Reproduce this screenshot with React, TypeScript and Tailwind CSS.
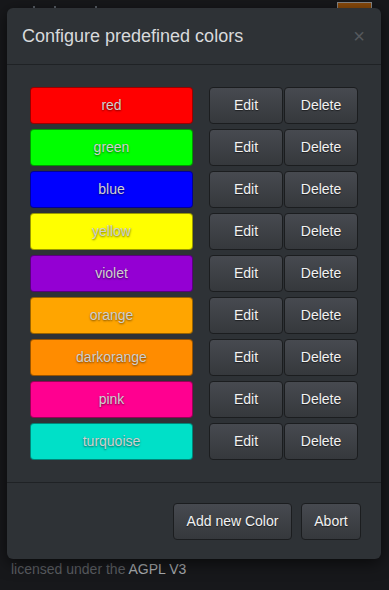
const colors = [
  { name: "red", bg: "bg-[#ff0000]" },
  { name: "green", bg: "bg-[#00ff00]" },
  { name: "blue", bg: "bg-[#0000ff]" },
  { name: "yellow", bg: "bg-[#ffff00]" },
  { name: "violet", bg: "bg-[#9400d3]" },
  { name: "orange", bg: "bg-[#ffa500]" },
  { name: "darkorange", bg: "bg-[#ff8c00]" },
  { name: "pink", bg: "bg-[#ff0090]" },
  { name: "turquoise", bg: "bg-[#00e0c8]" },
]

const btn =
  "h-[37px] rounded-[4px] border border-[#1b1d1f] bg-gradient-to-b from-[#474a50] to-[#35383c] text-[14px] text-[#f2f2f2] [text-shadow:0_1px_1px_rgba(0,0,0,0.5)]"

export default function App() {
  return (
    <div
      className="relative h-[590px] w-[389px] overflow-hidden bg-[#17181b]"
      style={{ fontFamily: '"Liberation Sans", Arial, sans-serif' }}
    >
      {/* page behind the dialog: only tips of the heading and the avatar peek out */}
      <span className="absolute left-[33px] top-[6px] h-[3px] w-[2px] bg-[#5a6068]" />
      <span className="absolute left-[54px] top-[6px] h-[3px] w-[2px] bg-[#5a6068]" />
      <span className="absolute left-[95px] top-[6px] h-[3px] w-[2px] bg-[#5a6068]" />
      <div className="absolute left-[337px] top-[2px] h-[30px] w-[35px] border border-[#888] bg-[#8a4a0a]" />
      <p className="absolute left-[11px] top-[559px] text-[14px] text-[#5c5f63]">
        licensed under the <span className="text-[#a9acaf]">AGPL V3</span>
      </p>

      {/* dialog */}
      <div className="absolute left-[7px] top-[8px] flex w-[374px] flex-col rounded-[6px] bg-[#2e3236] shadow-[0_4px_16px_rgba(0,0,0,0.6)]">
        <div className="flex h-[57px] items-center justify-between border-b border-[#1f2225] pl-[15px] pr-[16px]">
          <h2 className="text-[18px] text-[#d8dadc]">Configure predefined colors</h2>
          <span className="text-[20px] leading-none text-[#55595d]">×</span>
        </div>
        <div className="flex flex-col gap-[5px] px-[23px] pb-[22px] pt-[22px]">
          {colors.map((c) => (
            <div key={c.name} className="flex items-center">
              <div
                className={`${c.bg} flex h-[37px] flex-1 items-center justify-center rounded-[4px] border border-black/40 text-[14px] text-[#d0d0d0] [text-shadow:0_1px_2px_rgba(0,0,0,0.55)]`}
              >
                {c.name}
              </div>
              <button className={`${btn} ml-[16px] w-[74px]`}>Edit</button>
              <button className={`${btn} ml-[1px] w-[74px]`}>Delete</button>
            </div>
          ))}
        </div>
        <div className="flex justify-end gap-[9px] border-t border-[#1f2225] pb-[19px] pl-[15px] pr-[20px] pt-[20px]">
          <button className={`${btn} w-[119px]`}>Add new Color</button>
          <button className={`${btn} w-[60px]`}>Abort</button>
        </div>
      </div>
    </div>
  )
}
